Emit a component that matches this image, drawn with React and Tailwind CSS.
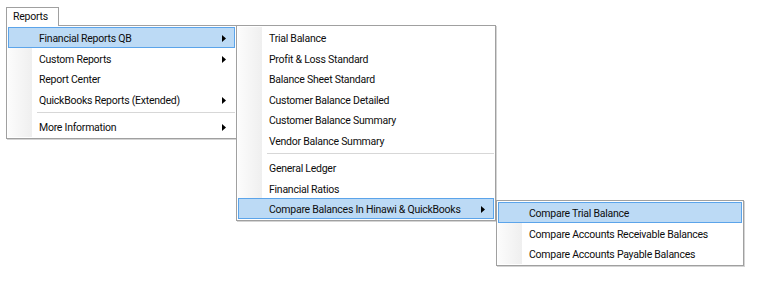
import React from "react";

const font = { fontFamily: "Roboto, 'Liberation Sans', sans-serif" };

const Arrow = () => (
  <svg width="4" height="7" viewBox="0 0 4 7" className="absolute right-[9px] top-[8px]">
    <path d="M0 0 L4 3.5 L0 7 Z" fill="#000" />
  </svg>
);

const Item = ({ label, sub, active }) => (
  <div
    className={
      "relative h-[20.5px] leading-[20.5px] pl-[31px] pr-6 whitespace-nowrap " +
      (active ? "bg-[#bcdaf5] outline outline-1 -outline-offset-1 outline-[#5ba4ea]" : "")
    }
  >
    <span className="relative top-[2px]">{label}</span>
    {sub && <Arrow />}
  </div>
);

const Sep = () => (
  <div className="h-[7px] flex items-center pl-[29px]">
    <div className="h-px w-full bg-[#d7d7d7]" />
  </div>
);

const Menu = ({ className, children }) => (
  <div className={"absolute border border-[#a0a0a0] bg-white p-px shadow-[1px_1px_0_#d4d4d4] " + className}>
    <div className="relative">
      <div className="absolute left-0 top-0 bottom-0 w-[24px] bg-gradient-to-r from-[#fcfcfc] to-[#efefef]" />
      <div className="relative">{children}</div>
    </div>
  </div>
);

export default function App() {
  return (
    <div className="relative w-[768px] h-[306px] bg-white text-[10.5px] tracking-[-0.25px] text-[#0d0d0d]" style={font}>
      <Menu className="left-[6px] top-[25px] w-[231px] z-10">
        <Item label="Financial Reports QB" sub active />
        <Item label="Custom Reports" sub />
        <Item label="Report Center" />
        <Item label="QuickBooks Reports (Extended)" sub />
        <Sep />
        <Item label="More Information" sub />
      </Menu>
      <div className="absolute left-[6px] top-[7px] w-[53px] h-[19px] z-20 bg-white border border-b-0 border-[#a0a0a0] pl-[6px] leading-[18px]">
        Reports
      </div>
      <Menu className="left-[236px] top-[25px] w-[260px] z-20">
        <Item label="Trial Balance" />
        <Item label="Profit & Loss Standard" />
        <Item label="Balance Sheet Standard" />
        <Item label="Customer Balance Detailed" />
        <Item label="Customer Balance Summary" />
        <Item label="Vendor Balance Summary" />
        <Sep />
        <Item label="General Ledger" />
        <Item label="Financial Ratios" />
        <Item label="Compare Balances In Hinawi & QuickBooks" sub active />
      </Menu>
      <Menu className="left-[496px] top-[200px] w-[248px] z-30">
        <Item label="Compare Trial Balance" active />
        <Item label="Compare Accounts Receivable Balances" />
        <Item label="Compare Accounts Payable Balances" />
      </Menu>
    </div>
  );
}
